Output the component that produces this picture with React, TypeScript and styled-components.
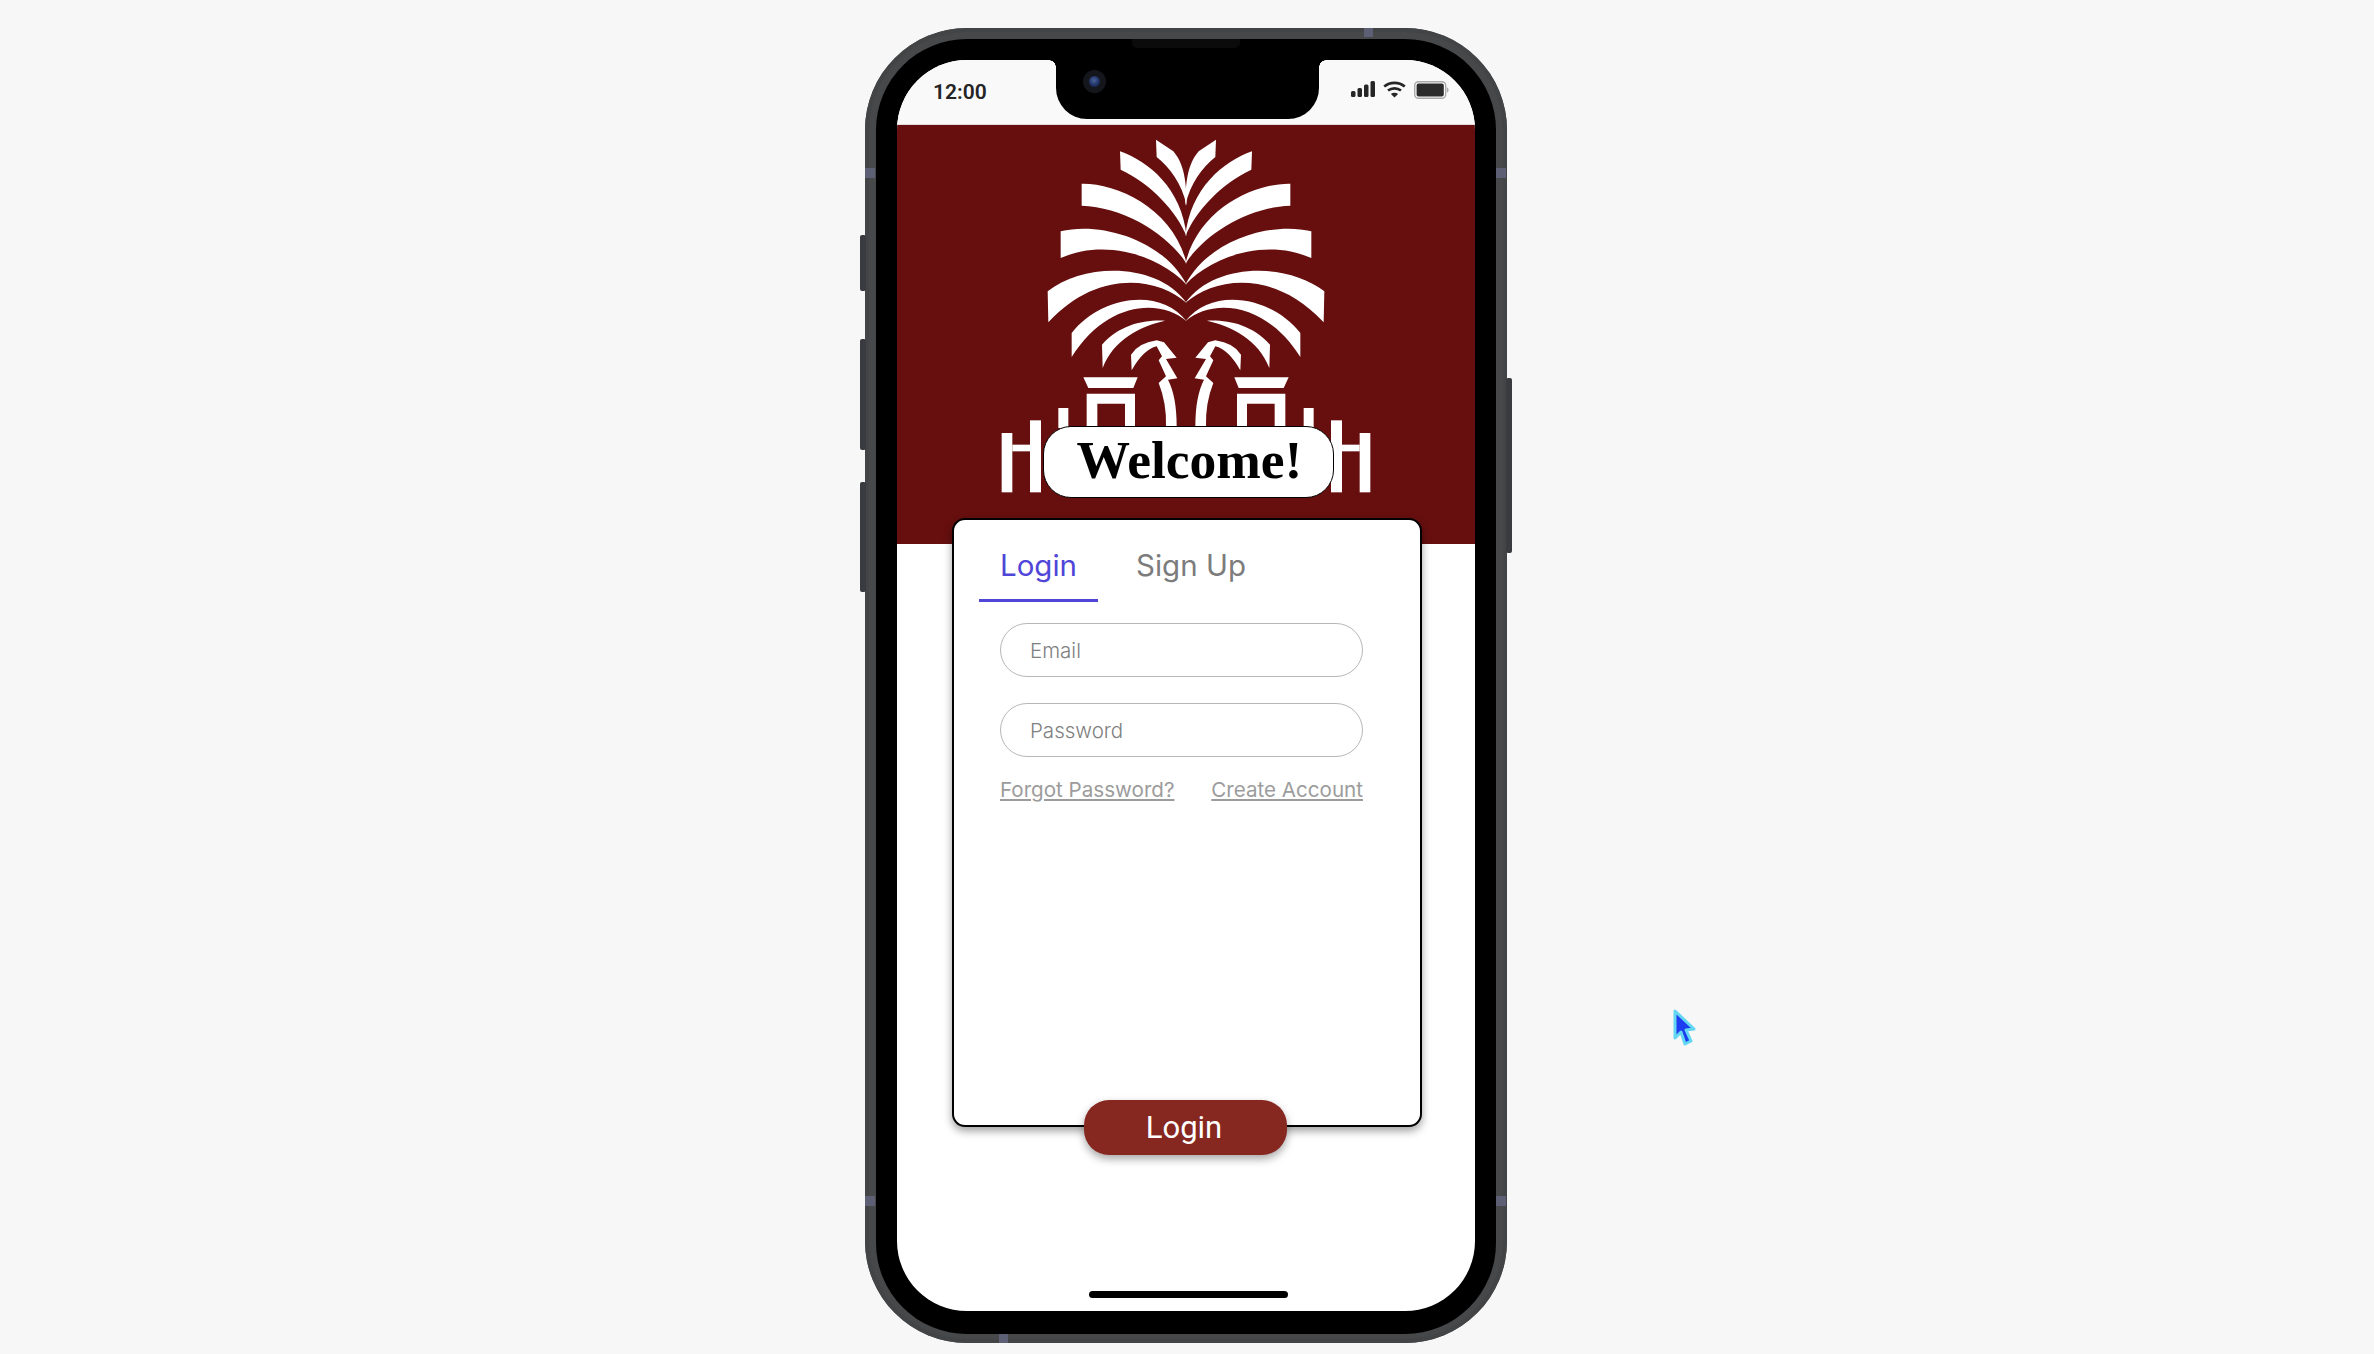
import styled, { createGlobalStyle } from "styled-components";

const GlobalStyle = createGlobalStyle`
  * {
    box-sizing: border-box;
  }

  body {
    margin: 0;
    background: #f7f7f7;
    font-family: "Inter", "Liberation Sans", sans-serif;
  }
`;

const Page = styled.main`
  position: relative;
  width: 2374px;
  height: 1354px;
  padding: 28px 0 0 865px;
  overflow: hidden;
`;

const Phone = styled.div`
  position: relative;
  width: 642px;
  height: 1315px;
  padding: 11px 11px 9px;
  border-radius: 102px;
  background: #47484a;
  box-shadow: inset 0 0 0 4px #434446;
`;

const Bezel = styled.div`
  height: 100%;
  padding: 21px 21px 23px;
  border-radius: 91px;
  background: #000;
`;

const Screen = styled.div`
  display: flex;
  flex-direction: column;
  height: 100%;
  overflow: hidden;
  border-radius: 70px;
  background: #fff;
`;

const Speaker = styled.div`
  position: absolute;
  top: 11px;
  left: 267px;
  width: 108px;
  height: 9px;
  border-radius: 0 0 5px 5px;
  background: #0b0b0c;
`;

const SideButton = styled.div<{ $side: "left" | "right"; $top: number; $height: number }>`
  position: absolute;
  top: ${(p) => p.$top}px;
  ${(p) => p.$side}: -5px;
  width: 6px;
  height: ${(p) => p.$height}px;
  border-radius: 2px;
  background: #3a3b40;
`;

const AntennaBand = styled.div<{ $x: number; $y: number; $wide?: boolean }>`
  position: absolute;
  top: ${(p) => p.$y}px;
  left: ${(p) => p.$x}px;
  width: ${(p) => (p.$wide ? 10 : 9)}px;
  height: ${(p) => (p.$wide ? 10 : 9)}px;
  background: #5d5f75;
`;

const StatusBar = styled.header`
  display: grid;
  grid-template-columns: 159px 263px 1fr;
  flex: 0 0 65px;
  background: #f9f9f9;
  border-bottom: 1px solid #e4dcdc;
`;

const Clock = styled.span`
  padding: 20px 0 0 36px;
  color: #242424;
  font-family: "Roboto", sans-serif;
  font-size: 21px;
  font-weight: 600;
  line-height: 24px;
`;

const Notch = styled.div`
  position: relative;
  display: flex;
  align-items: flex-start;
  height: 59px;
  padding: 10px 0 0 27px;
  border-radius: 0 0 31px 31px;
  background: #000;

  &::before,
  &::after {
    content: "";
    position: absolute;
    top: 0;
    width: 7px;
    height: 7px;
  }

  &::before {
    left: -7px;
    background: radial-gradient(circle at 0 100%, transparent 6.5px, #000 7px);
  }

  &::after {
    right: -7px;
    background: radial-gradient(circle at 100% 100%, transparent 6.5px, #000 7px);
  }
`;

const Camera = styled.div`
  width: 23px;
  height: 23px;
  padding: 6px;
  border-radius: 50%;
  background: #14161b;
`;

const Lens = styled.div`
  width: 11px;
  height: 11px;
  border-radius: 50%;
  background: radial-gradient(circle at 45% 40%, #4a629a 0, #1e3163 55%, #101a33 100%);
`;

const StatusIcons = styled.div`
  display: flex;
  align-items: flex-start;
  gap: 8px;
  padding: 21px 0 0 32px;
`;

const Hero = styled.section`
  position: relative;
  display: flex;
  justify-content: center;
  flex: 0 0 419px;
  padding-top: 13px;
  background: #670f0f;
`;

const Logo = styled.svg`
  display: block;
  width: 372px;
  height: 355px;
  filter: blur(0.6px);
`;

const WelcomeBadge = styled.h1`
  position: absolute;
  top: 301px;
  left: 146px;
  display: flex;
  align-items: center;
  justify-content: center;
  width: 291px;
  height: 72px;
  margin: 0;
  padding: 0 0 3px 2px;
  border: 1.5px solid #000;
  border-radius: 28px;
  background: #fff;
  color: #000;
  font-family: "Liberation Serif", serif;
  font-size: 53.5px;
  font-weight: 700;
  line-height: 1;
`;

const Card = styled.section`
  position: relative;
  flex: 0 0 609px;
  width: 470px;
  margin: -26px 0 0 55px;
  padding: 0 0 0 25px;
  border: 2px solid #000;
  border-radius: 13px;
  background: #fff;
  box-shadow: 0 4px 9px rgba(0, 0, 0, 0.38);
`;

const Tabs = styled.nav`
  display: flex;
  gap: 17px;
  margin-bottom: 21px;
`;

const Tab = styled.a<{ $active?: boolean }>`
  height: 82px;
  padding: 27px 21px 0;
  border-bottom: 3px solid ${(p) => (p.$active ? "#4f46d8" : "transparent")};
  color: ${(p) => (p.$active ? "#4f46d8" : "#7c7c7c")};
  font-size: 29.5px;
  line-height: 36px;
`;

const Form = styled.form`
  display: flex;
  flex-direction: column;
  gap: 26px;
  width: 363px;
  margin-left: 21px;
`;

const Field = styled.input`
  width: 100%;
  height: 54px;
  padding: 0 29px;
  border: 1.5px solid #b7b7b7;
  border-radius: 27px;
  outline: none;
  background: #fff;
  font-family: "Inter", sans-serif;
  font-size: 20.5px;
  font-weight: 300;

  &::placeholder {
    color: #808080;
    opacity: 1;
  }
`;

const LinkRow = styled.div`
  display: flex;
  justify-content: space-between;
  margin-top: -5px;
`;

const TextLink = styled.a`
  color: #9c9c9c;
  font-size: 20.6px;
  line-height: 24px;
  text-decoration: underline;
`;

const LoginButton = styled.button`
  position: relative;
  align-self: flex-start;
  width: 203px;
  height: 55px;
  margin: -27px 0 0 187px;
  padding: 0 3px 0 0;
  border: 0;
  border-radius: 25px;
  background: #862720;
  box-shadow: 0 4px 8px rgba(0, 0, 0, 0.35);
  color: #fff;
  font-family: "Roboto", sans-serif;
  font-size: 31px;
`;

const HomeBar = styled.div`
  flex: 0 0 7px;
  width: 199px;
  margin: auto 0 13px 192px;
  border-radius: 4px;
  background: #000;
`;

const Cursor = styled.svg`
  position: absolute;
  top: 1008px;
  left: 1671px;
  width: 26px;
  height: 40px;
`;

function SignalIcon() {
  return (
    <svg width="24" height="16" viewBox="0 0 24 16" fill="#262626">
      <rect x="0" y="10" width="4.5" height="6" rx="1.5" />
      <rect x="6.5" y="7" width="4.5" height="9" rx="1.5" />
      <rect x="13" y="3.5" width="4.5" height="12.5" rx="1.5" />
      <rect x="19.5" y="0" width="4.5" height="16" rx="1.5" />
    </svg>
  );
}

function WifiIcon() {
  return (
    <svg width="23" height="17" viewBox="0 0 23 17" fill="none" stroke="#262626" strokeWidth="2.6">
      <path d="M1.2 5.6C7 .6 16 .6 21.8 5.6" />
      <path d="M5 9.6c3.7-3 9.3-3 13 0" />
      <path d="M11.5 16.6 7.9 13c2-1.6 5.2-1.6 7.2 0z" fill="#262626" stroke="none" />
    </svg>
  );
}

function BatteryIcon() {
  return (
    <svg width="35" height="18" viewBox="0 0 35 18">
      <rect x="0.7" y="0.7" width="31" height="16.6" rx="3.8" fill="none" stroke="#a9a9a9" strokeWidth="1.4" />
      <rect x="2.600" y="2.600" width="27.2" height="12.8" rx="2" fill="#2b2b2b" />
      <path d="M33 6.500v5c1-.3 1.600-1.300 1.600-2.500S34 6.800 33 6.500z" fill="#a9a9a9" />
    </svg>
  );
}

function PalmHalf() {
  return (
    <>
      <path d="M588 60L640 95C665 125 680 165 680 258C665 190 630 145 590 112Z" />
      <path d="M480 95C565 125 665 205 680 350C650 275 570 190 482 150Z" />
      <path d="M365 192C470 190 640 265 680 432C620 340 490 262 365 258Z" />
      <path d="M302 335C420 305 610 360 680 495C600 410 440 355 302 415Z" />
      <path d="M263 515C370 430 590 425 680 550C590 470 410 450 265 608Z" />
      <path d="M335 640C420 530 600 500 680 605C600 535 440 545 335 712Z" />
      <path d="M426 675C480 615 550 600 615 603C540 620 460 660 428 745Z" />
      <path d="M513 705Q535 670 590 662L612 668L650 714L618 718L652 776L624 780Q650 830 650 920L618 920Q620 850 596 790L618 770L596 722L606 710L590 680Q550 690 515 752Z" />
      <path d="M370 773H533L520 805H385Z" />
      <path d="M380 822H525V925H495V852H412V925H380Z" />
      <rect x="125" y="940" width="32" height="178" />
      <rect x="157" y="975" width="55" height="20" />
      <rect x="210" y="902" width="33" height="216" />
      <rect x="295" y="865" width="30" height="60" />
    </>
  );
}

export default function App() {
  return (
    <Page>
      <GlobalStyle />
      <Phone>
        <SideButton $side="left" $top={207} $height={56} />
        <SideButton $side="left" $top={311} $height={111} />
        <SideButton $side="left" $top={454} $height={110} />
        <SideButton $side="right" $top={350} $height={175} />
        <AntennaBand $x={0} $y={140} $wide />
        <AntennaBand $x={631} $y={140} $wide />
        <AntennaBand $x={0} $y={1168} $wide />
        <AntennaBand $x={631} $y={1168} $wide />
        <AntennaBand $x={499} $y={0} />
        <AntennaBand $x={134} $y={1306} />
        <Speaker />
        <Bezel>
          <Screen>
            <StatusBar>
              <Clock>12:00</Clock>
              <Notch>
                <Camera>
                  <Lens />
                </Camera>
              </Notch>
              <StatusIcons>
                <SignalIcon />
                <WifiIcon />
                <BatteryIcon />
              </StatusIcons>
            </StatusBar>
            <Hero>
              <Logo viewBox="120 55 1116 1065" fill="#fff">
                <PalmHalf />
                <g transform="translate(1356 0) scale(-1 1)">
                  <PalmHalf />
                </g>
              </Logo>
              <WelcomeBadge>Welcome!</WelcomeBadge>
            </Hero>
            <Card>
              <Tabs>
                <Tab $active>Login</Tab>
                <Tab>Sign Up</Tab>
              </Tabs>
              <Form>
                <Field type="email" placeholder="Email" />
                <Field type="password" placeholder="Password" />
                <LinkRow>
                  <TextLink href="#">Forgot Password?</TextLink>
                  <TextLink href="#">Create Account</TextLink>
                </LinkRow>
              </Form>
            </Card>
            <LoginButton>Login</LoginButton>
            <HomeBar />
          </Screen>
        </Bezel>
      </Phone>
      <Cursor viewBox="0 0 26 40">
        <path d="M4 3 L4 30 L10 24 L14 36 L20 33 L15 22 L23 21 Z" fill="#1d3df0" stroke="#62d6f2" strokeWidth="3" strokeLinejoin="round" />
      </Cursor>
    </Page>
  );
}
